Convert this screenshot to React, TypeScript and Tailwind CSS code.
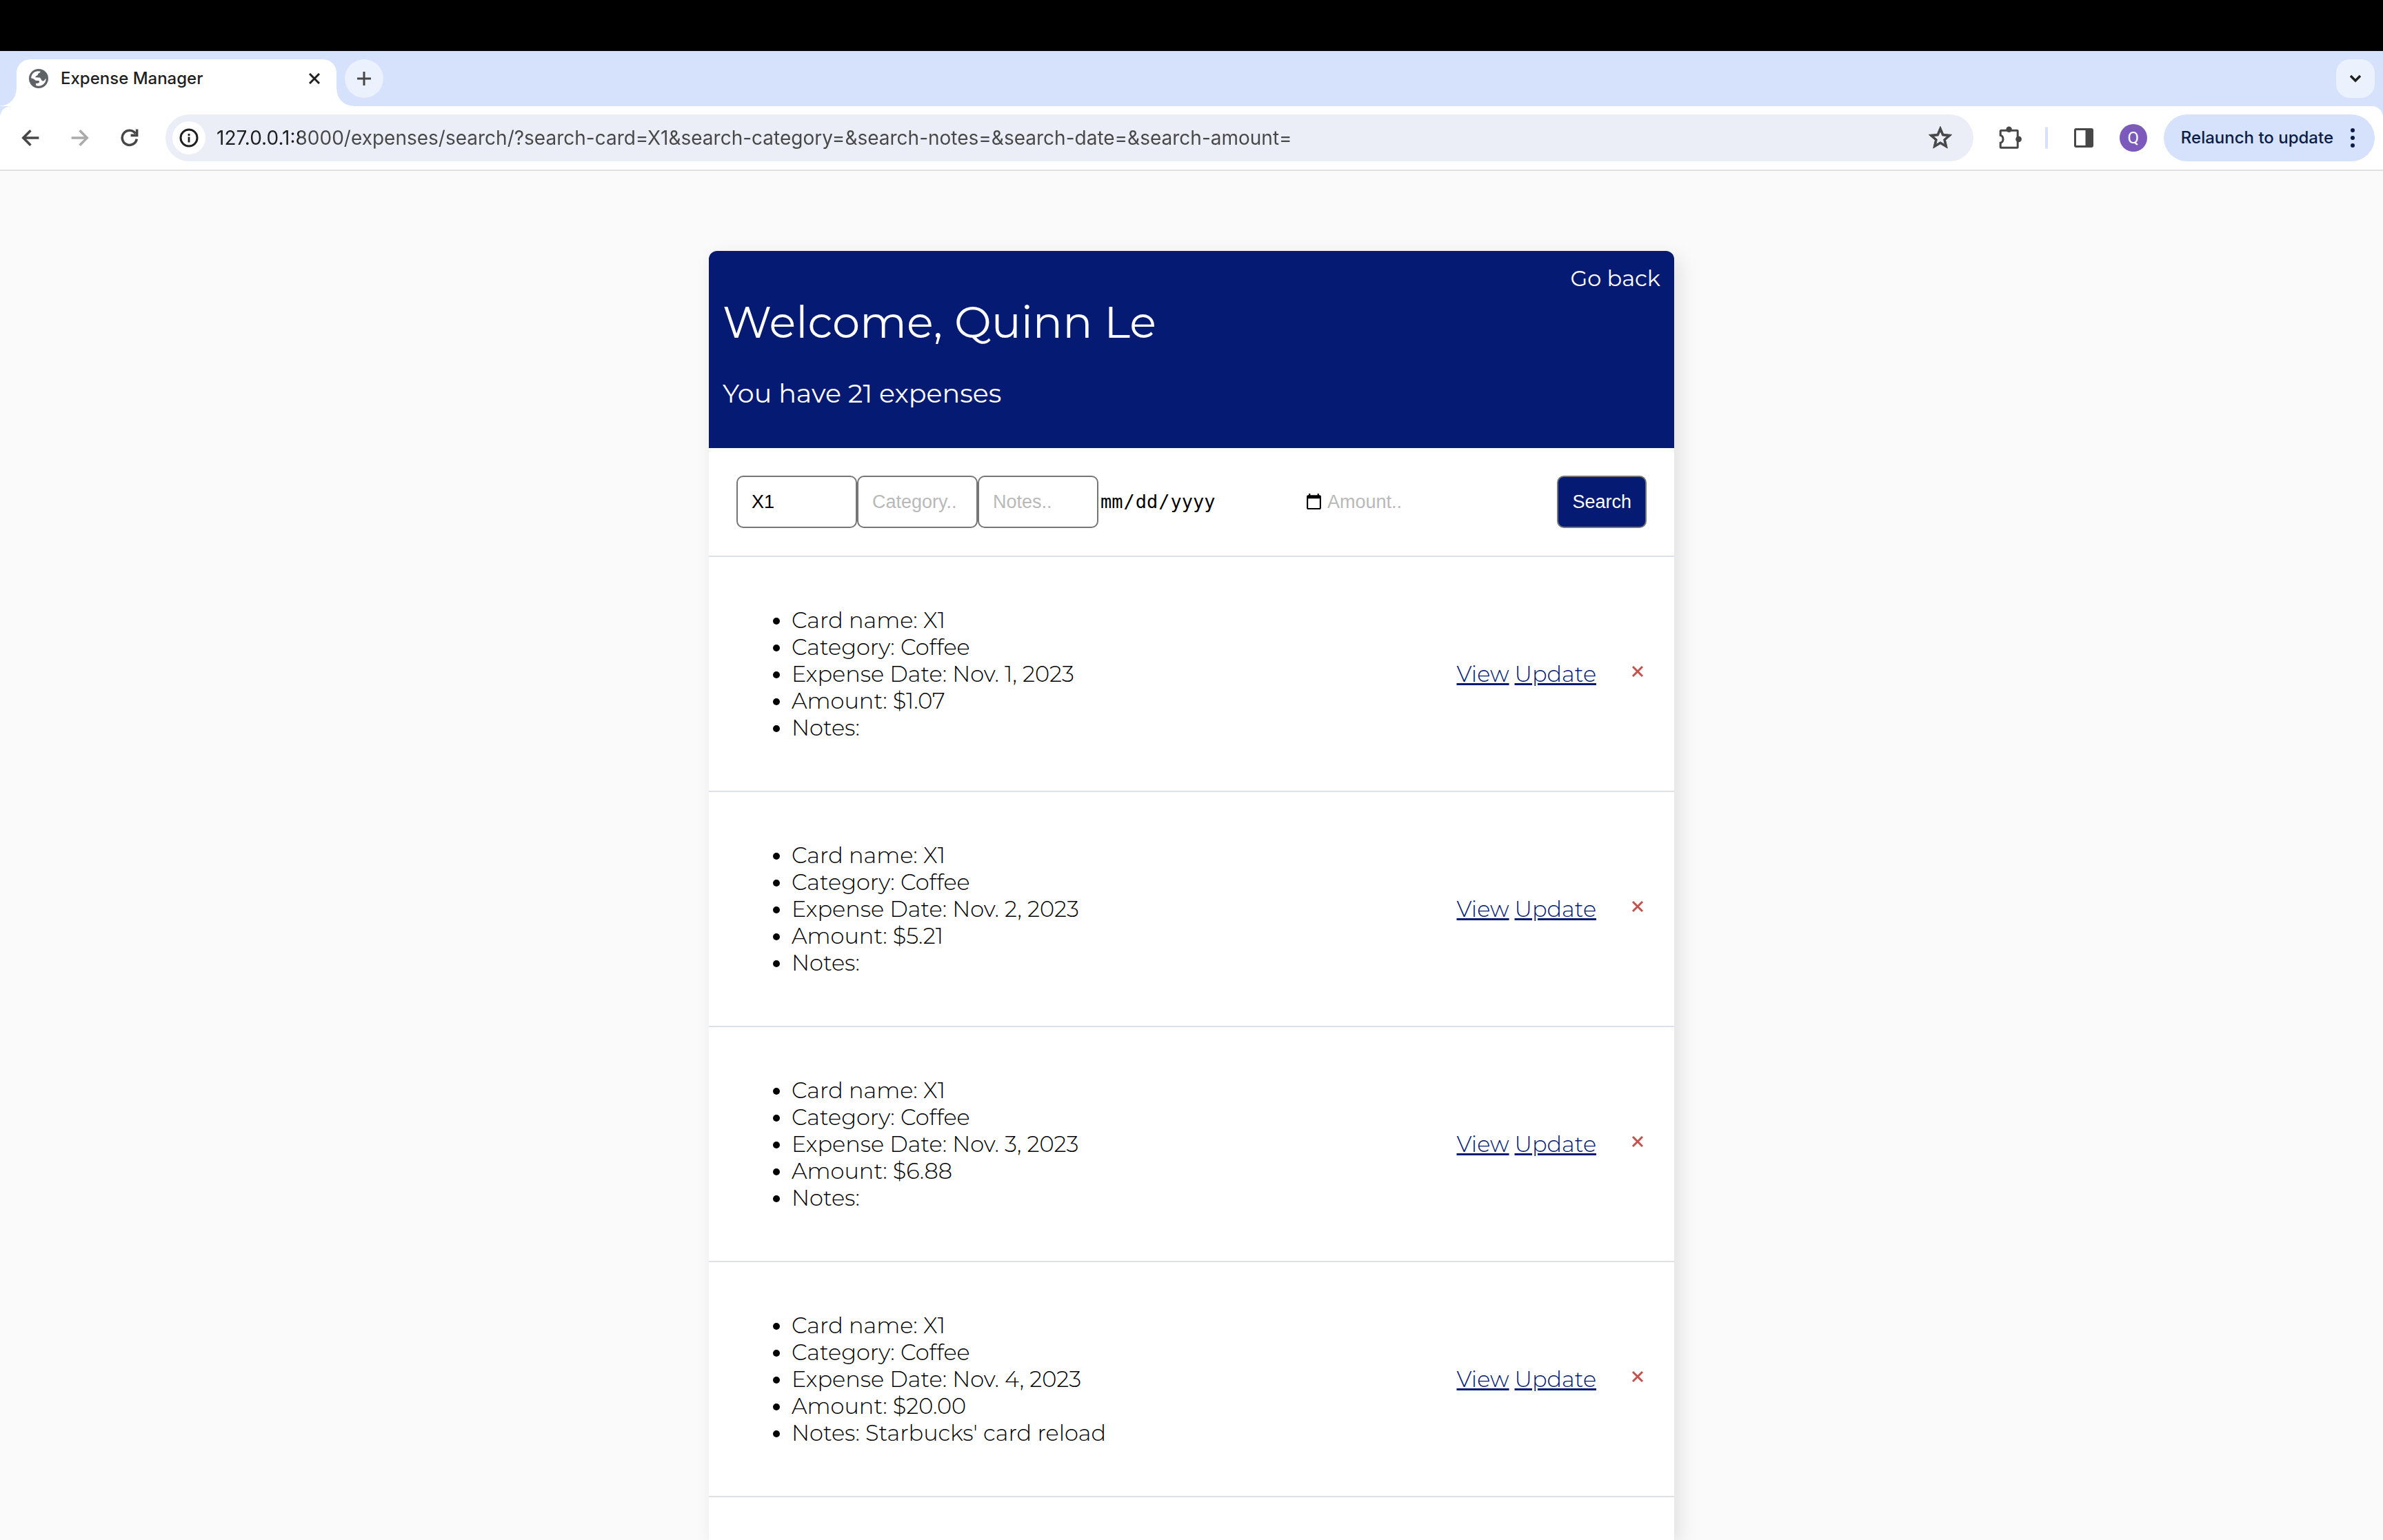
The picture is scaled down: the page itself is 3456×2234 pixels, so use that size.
import { MdStarOutline } from "react-icons/md";

type Expense = { date: string; amount: string; notes: string };

const expenses: Expense[] = [
  { date: "Nov. 1, 2023", amount: "$1.07", notes: "" },
  { date: "Nov. 2, 2023", amount: "$5.21", notes: "" },
  { date: "Nov. 3, 2023", amount: "$6.88", notes: "" },
  { date: "Nov. 4, 2023", amount: "$20.00", notes: "Starbucks' card reload" },
];

const pageUrl =
  "127.0.0.1:8000/expenses/search/?search-card=X1&search-category=&search-notes=&search-date=&search-amount=";

function GlobeIcon() {
  return (
    <svg className="size-7 shrink-0" viewBox="0 0 28 28" aria-hidden="true">
      <circle cx="14" cy="14" r="14" fill="#5f6368" />
      <path
        d="M3.2 13.6C3.2 8 7 4 12.4 3.3L16.6 3.6C16.6 6.4 13.2 5.8 12.9 8C12.7 10.2 9.4 9.4 9.4 12.3L15 12.5C18.2 13 17 17 20 17.4C22.6 17.8 23 15.2 24.7 13.8C25 19.4 20.4 24.8 14 24.8C12.4 24.8 11 24.4 10 23.8V21C14 21.2 15.6 20 15 18C14.4 16 11.4 17.6 9.2 16.4C7.4 15 6 13.6 3.2 13.6Z"
        fill="#fff"
      />
    </svg>
  );
}

function BackIcon() {
  return (
    <svg className="size-[26px]" viewBox="0 0 26 26" fill="none" stroke="currentColor" strokeWidth="3.6" aria-hidden="true">
      <path d="M25.4 13H3M13.4 2.2L2.8 13L13.4 23.8" />
    </svg>
  );
}

function ReloadIcon() {
  return (
    <svg className="size-[26px]" viewBox="0 0 26 26" fill="none" stroke="currentColor" strokeWidth="3.6" aria-hidden="true">
      <path d="M23.3 14.6A10.6 10.6 0 1 1 21.6 6.8" />
      <path d="M23.6 .6V9.4H14.6" />
    </svg>
  );
}

function PuzzleIcon() {
  return (
    <svg className="size-[34px]" viewBox="0 0 34 34" aria-hidden="true">
      <path
        d="M3.4 6.2H26.2a1 1 0 0 1 1 1V30.2a1 1 0 0 1-1 1H3.2a1 1 0 0 1-1-1V24.2C5 23.6 6 21.4 6 18.8C6 16.2 5 14 2.2 13.4V7.2a1 1 0 0 1 1-1Z"
        fill="none"
        stroke="currentColor"
        strokeWidth="3"
      />
      <circle cx="14.6" cy="4.8" r="4.2" fill="currentColor" />
      <circle cx="28.6" cy="18.8" r="4.4" fill="currentColor" />
    </svg>
  );
}

function BrowserChrome() {
  return (
    <header className="bg-[#d6e1fc] font-['Inter',sans-serif]">
      <div className="h-[74px] bg-black" />
      <div className="flex h-20 items-end justify-between pr-3 pl-6">
        <div className="flex items-end gap-3">
          <div className="relative flex h-[68px] w-[464px] items-center rounded-t-[20px] bg-white pb-3 pr-5 pl-[18px]">
            <span className="absolute bottom-0 -left-6 size-6 bg-[radial-gradient(circle_at_0_0,transparent_23px,#fff_24px)]" />
            <span className="absolute -right-6 bottom-0 size-6 bg-[radial-gradient(circle_at_100%_0,transparent_23px,#fff_24px)]" />
            <GlobeIcon />
            <span className="ml-[18px] flex-1 text-[24px] leading-8 font-medium text-[#1f1f1f]">Expense Manager</span>
            <button type="button" aria-label="Close tab" className="flex size-6 items-center justify-center text-[#1f1f1f]">
              <svg className="size-4" viewBox="0 0 16 16" stroke="currentColor" strokeWidth="3" aria-hidden="true">
                <path d="M1 1L15 15M15 1L1 15" />
              </svg>
            </button>
          </div>
          <button type="button" aria-label="New tab" className="mb-3 flex size-14 items-center justify-center rounded-full bg-[#ebf2fd] text-[#474747]">
            <svg className="size-5" viewBox="0 0 20 20" stroke="currentColor" strokeWidth="3" aria-hidden="true">
              <path d="M10 0V20M0 10H20" />
            </svg>
          </button>
        </div>
        <button type="button" aria-label="Search tabs" className="mb-3 flex size-14 items-center justify-center rounded-[20px] bg-[#ebf2fd] text-[#1f1f1f]">
          <svg className="size-4" viewBox="0 0 16 16" fill="none" stroke="currentColor" strokeWidth="3.4" aria-hidden="true">
            <path d="M1 4L8 11L15 4" />
          </svg>
        </button>
      </div>

      <div className="flex h-[94px] items-center rounded-t-2xl border-b-2 border-[#e1e1e1] bg-white pr-3 pl-[31px] text-[#474747]">
        <div className="flex items-center gap-[46px]">
          <button type="button" aria-label="Back">
            <BackIcon />
          </button>
          <button type="button" aria-label="Forward" disabled className="-scale-x-100 text-[#ababab]">
            <BackIcon />
          </button>
          <button type="button" aria-label="Reload">
            <ReloadIcon />
          </button>
        </div>

        <div className="ml-[39px] flex h-[68px] flex-1 items-center rounded-full bg-[#ebeef7] pr-7 pl-[10px]">
          <button type="button" aria-label="View site information" className="flex size-12 items-center justify-center rounded-full bg-white text-[#1f1f1f]">
            <svg className="size-7" viewBox="0 0 28 28" fill="none" stroke="currentColor" strokeWidth="3" aria-hidden="true">
              <circle cx="14" cy="14" r="12" />
              <path d="M14 12.6V20.6M14 8V11" strokeWidth="2.8" />
            </svg>
          </button>
          <input
            type="text"
            aria-label="Address"
            defaultValue={pageUrl}
            className="ml-4 min-w-0 flex-1 bg-[linear-gradient(90deg,#1f1f1f_120px,#474747_120px)] bg-clip-text text-[28px] leading-9 text-transparent outline-none"
          />
          <button type="button" aria-label="Bookmark this tab">
            <MdStarOutline className="size-10" stroke="currentColor" strokeWidth="0.6" />
          </button>
        </div>

        <button type="button" aria-label="Extensions" className="ml-[37px]">
          <PuzzleIcon />
        </button>
        <span className="ml-[33px] h-8 w-1 rounded-full bg-[#d6e1fc]" />
        <button type="button" aria-label="Side panel" className="ml-[38px]">
          <svg className="size-7" viewBox="0 0 28 28" aria-hidden="true">
            <rect x="1.5" y="1.5" width="25" height="25" rx="1.5" fill="none" stroke="currentColor" strokeWidth="3" />
            <path d="M16.5 1H27V27H16.5Z" fill="currentColor" />
          </svg>
        </button>
        <button
          type="button"
          aria-label="Profile"
          className="ml-[38px] size-10 rounded-full bg-[#7b5abb] text-center font-['Roboto',sans-serif] text-[24px] leading-10 text-white"
        >
          Q
        </button>
        <button
          type="button"
          className="ml-6 flex h-[68px] items-center gap-6 rounded-full bg-[#d6e1fc] pr-7 pl-[25px] text-[24px] leading-8 font-medium text-[#0a1d48]"
        >
          Relaunch to update
          <svg className="h-7 w-2" viewBox="0 0 8 28" fill="currentColor" aria-hidden="true">
            <circle cx="4" cy="3" r="3" />
            <circle cx="4" cy="14" r="3" />
            <circle cx="4" cy="25" r="3" />
          </svg>
        </button>
      </div>
    </header>
  );
}

function SearchForm() {
  const box =
    "h-[76px] w-[175px] rounded-[10px] border-2 border-[#767676] bg-white px-5 text-black placeholder:text-[#b9b9b9]";
  return (
    <form
      className="flex items-center border-b-2 border-[#dee2e6] p-10 font-['Liberation_Sans',Arial,sans-serif] text-[27px]"
      onSubmit={(e) => e.preventDefault()}
    >
      <input type="text" aria-label="Card" defaultValue="X1" className={box} />
      <input type="text" aria-label="Category" placeholder="Category.." className={box} />
      <input type="text" aria-label="Notes" placeholder="Notes.." className={box} />
      <input
        type="date"
        aria-label="Date"
        className="w-[330px] bg-transparent px-[2px] font-['DejaVu_Sans_Mono',monospace] text-[27px] text-black"
      />
      <input
        type="text"
        aria-label="Amount"
        placeholder="Amount.."
        className="min-w-0 flex-1 bg-transparent px-[2px] placeholder:text-[#b9b9b9]"
      />
      <button type="submit" className="h-[76px] rounded-[10px] border-2 border-[#767676] bg-[#051a72] px-5 text-white">
        Search
      </button>
    </form>
  );
}

function ExpenseRow({ expense }: { expense: Expense }) {
  const link = "text-[#051a72] underline decoration-[3px] underline-offset-2";
  return (
    <li className="flex items-center justify-between border-b-2 border-[#dee2e6] px-10 py-[72px]">
      <ul className="list-disc pl-20 leading-[39px]">
        <li>Card name: X1</li>
        <li>Category: Coffee</li>
        <li>Expense Date: {expense.date}</li>
        <li>Amount: {expense.amount}</li>
        <li>Notes: {expense.notes}</li>
      </ul>
      <div className="flex items-center">
        <a href="#view" className={link}>View</a>
        <a href="#update" className={`${link} ml-2`}>Update</a>
        <button type="button" aria-label="Delete expense" className="mr-1 ml-[51px] pb-2 text-[#c4524c]">
          <svg className="size-[18px]" viewBox="0 0 18 18" stroke="currentColor" strokeWidth="3" aria-hidden="true">
            <path d="M2 2L16 16M16 2L2 16" />
          </svg>
        </button>
      </div>
    </li>
  );
}

export default function App() {
  return (
    <div className="flex min-h-screen flex-col bg-[#fafafa]">
      <BrowserChrome />
      <main className="flex flex-1 px-10 pt-[116px] font-['Montserrat','Inter',sans-serif] text-[32px] font-light text-black">
        <div className="mx-auto w-full max-w-[1400px] rounded-t-xl bg-white shadow-[8px_8px_28px_rgba(0,0,0,0.1)]">
          <div className="flex flex-col rounded-t-xl bg-[#051a72] px-5 pt-5 pb-[55px] font-normal text-white">
            <a href="#back" className="self-end leading-[39px]">Go back</a>
            <h1 className="mt-1 text-[64px] leading-[80px]">Welcome, Quinn Le</h1>
            <h2 className="mt-10 text-[38px] leading-[48px]">You have 21 expenses</h2>
          </div>
          <SearchForm />
          <ul>
            {expenses.map((expense) => (
              <ExpenseRow key={expense.date} expense={expense} />
            ))}
          </ul>
        </div>
      </main>
    </div>
  );
}
